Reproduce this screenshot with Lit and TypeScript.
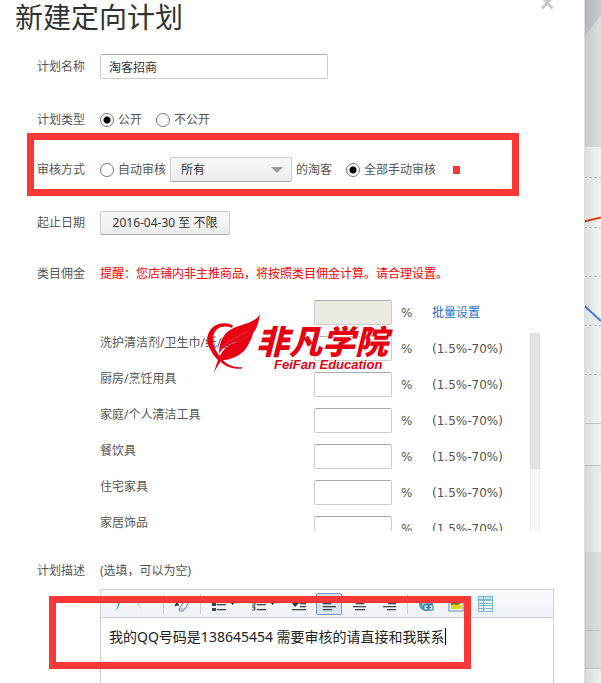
import { LitElement, html, svg, css } from "lit";
import { customElement } from "lit/decorators.js";

const CATEGORIES = ["洗护清洁剂/卫生巾/纸/香薰", "厨房/烹饪用具", "家庭/个人清洁工具", "餐饮具", "住宅家具", "家居饰品"];

const lines = (rows: number[][]) =>
  rows.map(([x, y, w]) => svg`<rect x=${x} y=${y} width=${w} height="1" fill="#444"/><rect x=${x} y=${y + 1} width=${w} height="1" fill="#444" opacity=".3"/>`);

const ICONS: Record<string, unknown> = {
  undo: svg`<path d="M5 2c8-2 11 7 3 13 4-5 4-10-3-11z" fill="#5aa5dc"/>`,
  redo: svg`<path d="M7 2c-8 0-10 8-2 12-3-5-2-9 3-10z" fill="#cfe3f2"/>`,
  eraser: svg`<path d="M1 10l5-6M1 9h4" stroke="#333" stroke-width="1.5"/><path d="M5 13l6-9h5l-5 9-2 2H6z" fill="#f4f9fd" stroke="#6b8296"/><path d="M6 13h5l4-7" fill="none" stroke="#8aa3b8"/>`,
  list: svg`<path d="M1 2h4v3H1zM1 7h4v3H1zM1 12h4v3H1z" fill="#444"/>${lines([[6, 3, 9], [6, 8, 9], [6, 13, 9]])}`,
  ordered: svg`<path d="M2 2h2v4M1 7h3v2H2v1h2M1 11h3v3H1M2 12h2" fill="none" stroke="#555"/>${lines([[6, 3, 9], [6, 8, 9], [6, 13, 9]])}`,
  indent: svg`<path d="M1 7h3V4h2v3h2L4 11z" fill="#333"/>${lines([[9, 4, 6], [9, 7, 6], [9, 10, 6], [1, 13, 14]])}`,
  left: svg`${lines([[2, 4, 13], [2, 7, 8], [2, 10, 13], [2, 13, 9]])}`,
  center: svg`${lines([[2, 4, 13], [5, 7, 8], [2, 10, 13], [4, 13, 10]])}`,
  right: svg`${lines([[2, 4, 13], [7, 7, 8], [2, 10, 13], [6, 13, 9]])}`,
  link: svg`<circle cx="8" cy="8" r="7" fill="#4c9ccc"/><path d="M3 6l4-2 1 4-3 3z" fill="#8fc27c"/><path d="M6 9h4v5H6zM11 9h4v5h-4zM8 11.500h5" fill="#eef6fc" stroke="#2b6ca8"/>`,
  image: svg`<rect x="1" y="1" width="14" height="14" fill="#fff" stroke="#5584a8"/><path d="M3 3h10v6H3z" fill="#536b3c"/><path d="M3 9l3-1 2 1 5-2v6H3z" fill="#d9d411"/>`,
  table: svg`<path d="M0 0h15v16H0z" fill="#79b8d8"/><path d="M1 1h4v2H1zM6 1h8v2H6z" fill="#c2e4f3"/><path d="M1 5h4v2H1zM1 8h4v1H1zM1 10h4v2H1zM1 13h4v2H1zM6 5h8v2H6zM6 8h8v1H6zM6 10h8v2H6zM6 13h8v2H6z" fill="#f3fbff"/>`,
};

@customElement("app-root")
export class AppRoot extends LitElement {
  static styles = css`
    :host {
      display: block;
      font: 12px/20px "Noto Sans", "Noto Sans CJK SC", sans-serif;
      color: #555;
    }
    * { box-sizing: border-box; }
    input, select, button, textarea { font: inherit; color: #333; margin: 0; }
    .page { display: flex; min-height: 100vh; max-height: 100vh; overflow: hidden; background: #fff; }
    .dialog { flex: 1; min-width: 0; position: relative; display: flex; flex-direction: column; }
    .backdrop { flex: none; width: 17px; background: #ebebeb; overflow: hidden; }
    .backdrop svg { display: block; }
    .title { margin: 0 0 0 15px; font-size: 28px; line-height: 34px; font-weight: 400; color: #333; }
    .close { position: absolute; top: 0; right: 30px; width: 14px; height: 10px; padding: 0; border: 0; background: none; }
    .close svg { display: block; }
    .row { display: flex; align-items: center; padding: 0 30px 0 100px; position: relative; }
    .row > .label { width: 63px; margin-left: -63px; flex: none; }
    .name { margin-top: 20px; }
    .type { margin-top: 31px; }
    .review { margin-top: 27px; }
    .date { margin-top: 29px; }
    .fee { margin-top: 29px; }
    .desc { margin-top: 30px; }
    .field { height: 25px; border: 1px solid #ccc; border-top-color: #aaa; border-radius: 2px; background: #fff; }
    .name .field { width: 228px; padding: 0 8px; }
    .radio { display: flex; align-items: center; gap: 4px; margin-right: 14px; white-space: nowrap; }
    .radio input {
      appearance: none; width: 14px; height: 14px; border: 1px solid #777; border-radius: 50%; background: #fff;
    }
    .radio input:checked { background: radial-gradient(circle, #000 3px, #fff 4px); }
    .review .radio { margin-right: 0; }
    .picker { position: relative; display: flex; margin: 0 4px; }
    .picker select {
      appearance: none; width: 122px; height: 25px; padding: 0 10px; border: 1px solid #ccc; border-bottom-color: #aaa;
      border-radius: 2px; background: linear-gradient(#f8f8f8, #ececec);
    }
    .picker svg { position: absolute; right: 9px; top: 10px; pointer-events: none; }
    .suffix { margin-right: 14px; }
    .dot { width: 7px; height: 8px; margin-left: 17px; background: #fb3838; }
    .range-button {
      min-width: 130px; height: 24px; padding: 0 10px; line-height: 22px; border: 1px solid #ccc; border-bottom-color: #aaa;
      border-radius: 2px; background: linear-gradient(#f8f8f8, #ececec); white-space: nowrap;
    }
    .wide { font-family: "DejaVu Sans", "Noto Sans CJK SC", sans-serif; }
    .tip { color: #f00; }
    .rates { margin: 16px 44px 0 100px; position: relative; }
    .line { display: grid; grid-template-columns: minmax(0, 1fr) 78px 40px 98px; }
    .line .field { width: 100%; padding: 0 6px; }
    .line .unit, .line .range { line-height: 26px; }
    .line .unit { padding-left: 9px; }
    .batch { height: 25px; padding-right: 10px; }
    .batch .field { background: #ebebe3; }
    .link { color: #2a6fd0; text-decoration: none; }
    .scroller { display: grid; grid-template-columns: minmax(0, 1fr) 10px; height: 198px; margin-top: 8px; overflow: hidden; }
    .items .line { height: 36px; }
    .items .field, .items .unit, .items .range { margin-top: 3px; }
    .track { border: 1px solid #ededed; background: #f7f7f7; }
    .thumb { height: 136px; margin: -1px; border: 1px solid #ddd; background: #e5e5e5; }
    .brand { position: absolute; left: 106px; top: 13px; width: 186px; height: 62px; color: #e60012; pointer-events: none; }
    .brand svg { position: absolute; left: 0; top: 0; }
    .brand-text { position: absolute; left: 50px; top: 9px; display: flex; flex-direction: column; white-space: nowrap; }
    .brand-cn {
      font: italic 900 33px/36px "Noto Sans CJK SC", sans-serif;
      text-shadow: 1px 0 #fff, -1px 0 #fff, 0 1px #fff, 0 -1px #fff;
    }
    .brand-en {
      padding-left: 18px; font: italic bold 13px/14px "DejaVu Sans", sans-serif;
      font-family: "Liberation Sans", sans-serif;
      text-shadow: 1px 0 #fff, -1px 0 #fff, 0 1px #fff, 0 -1px #fff;
    }
    .editor {
      position: relative; flex: 1; display: flex; flex-direction: column; min-height: 94px; margin: 8px 30px 0 100px;
      border: 1px solid #ced1dd; border-bottom: 0;
    }
    .tools {
      display: flex; align-items: center; gap: 4px; height: 28px; padding: 0 1px; overflow: hidden;
      border-bottom: 1px solid #ced1dd; background: linear-gradient(#f9fafe, #eef3f7);
    }
    .tool {
      display: flex; align-items: center; flex: none; width: 26px; height: 22px; padding: 0 4px; border: 1px solid transparent;
      border-radius: 2px; background: none;
    }
    .tool svg { flex: none; }
    .tool.menu { width: 36px; gap: 3px; }
    .tool.on { border-color: #7294cb; background: #dae3f0; }
    .sep { flex: none; width: 1px; height: 20px; margin: 0 1px 0 1px; background: #ced1d6; }
    .text { display: flex; padding: 9px 8px; }
    .text textarea {
      field-sizing: content; height: 20px; padding: 0; border: 0; outline: 0; resize: none; overflow: hidden; background: none;
      font-size: 14px; line-height: 20px; color: #222; white-space: pre;
    }
    .caret { width: 1px; height: 17px; margin-top: 1px; background: #000; }
    .mark { position: absolute; border: 7px solid #fb3838; pointer-events: none; }
    .mark-review { left: 27px; right: 65px; top: -24px; height: 63px; }
    .mark-desc { left: -52px; right: 82px; top: 6px; height: 73px; }
  `;

  private tool(name: string, label: string, extra = "") {
    return html`<button class="tool ${extra}" type="button" aria-label=${label}>
      <svg width="16" height="16" viewBox="0 0 16 16">${ICONS[name]}</svg>
      ${extra === "menu" ? html`<svg width="5" height="4" viewBox="0 0 5 4"><path d="M0 0h5L2.500 3z" fill="#333" /></svg>` : ""}
    </button>`;
  }

  private backdrop() {
    return html`<div class="backdrop">
      <svg width="17" height="683" viewBox="0 0 17 683" aria-hidden="true">
        <defs>
          <linearGradient id="shade"><stop offset="0" stop-opacity=".1" /><stop offset="1" stop-opacity="0" /></linearGradient>
        </defs>
        <rect width="17" height="147" fill="#dedede" />
        <path d="M0 0h17v15L1 36H0z" fill="#c8c9cc" />
        <rect y="147" width="17" height="318" fill="#f4f4f4" />
        <rect y="465" width="17" height="87" fill="#efefef" />
        <rect y="552" width="17" height="117" fill="#e0e0e0" />
        <rect y="669" width="17" height="14" fill="#efefef" />
        <path d="M0 177.500h17M0 227.500h17M0 276.500h17M0 325.500h17M0 374.500h17" stroke="#c6c6c6" stroke-dasharray="3 2" />
        <path d="M0 423.500h17M0 465.500h17M0 630.500h17M0 668.500h17" stroke="#c8c8c8" />
        <path d="M0 221.500L17 217.500" stroke="#e2440d" stroke-width="2" />
        <path d="M0 305.500L17 321" stroke="#3d7fdc" stroke-width="2" />
        <rect width="17" height="683" fill="url(#shade)" />
        <rect width="1" height="683" fill="#dcdcdc" />
      </svg>
    </div>`;
  }

  private brand() {
    return html`<div class="brand">
      <svg width="56" height="60" viewBox="48 69 168 180" aria-hidden="true">
        <g fill="#e60012">
          <path d="M129 107C112 96 82 98 66 114C46 134 50 163 64 184C69 194 76 202 84 211L92 201C74 179 62 154 72 132C79 112 100 104 126 113Z" />
          <path d="M210 72C198 94 174 99 144 109C112 119 93 139 88 176L87 192C96 174 112 165 129 158C158 148 184 140 196 120C203 109 207 91 210 72Z" />
          <path d="M190 127C168 149 139 153 118 166C102 176 91 192 84 209L71 249C79 235 85 224 94 211C126 210 157 194 171 171C179 157 186 145 190 127Z" />
          <path d="M84 205C100 229 126 239 154 236L158 231C130 234 109 224 94 205Z" />
        </g>
        <path d="M92 180C110 152 142 139 176 124" fill="none" stroke="#fff" stroke-width="1" opacity=".6" />
      </svg>
      <div class="brand-text">
        <span class="brand-cn">非凡学院</span>
        <span class="brand-en">FeiFan Education</span>
      </div>
    </div>`;
  }

  render() {
    return html`<div class="page">
      <main class="dialog">
        <h1 class="title">新建定向计划</h1>
        <button class="close" type="button" aria-label="关闭">
          <svg width="14" height="10" viewBox="0 0 14 10"><path d="M2 -3L12.500 8.500M12.500 -3L2 8.500" stroke="#c9c9c9" stroke-width="3" /></svg>
        </button>

        <div class="row name">
          <label class="label" for="plan">计划名称</label>
          <input class="field" id="plan" type="text" .value=${"淘客招商"} />
        </div>

        <div class="row type" role="radiogroup" aria-labelledby="type">
          <span class="label" id="type">计划类型</span>
          <label class="radio"><input type="radio" name="type" checked />公开</label>
          <label class="radio"><input type="radio" name="type" />不公开</label>
        </div>

        <div class="row review" role="radiogroup" aria-labelledby="review">
          <span class="label" id="review">审核方式</span>
          <label class="radio"><input type="radio" name="review" />自动审核</label>
          <span class="picker">
            <select aria-label="淘客范围"><option>所有</option></select>
            <svg width="12" height="6" viewBox="0 0 12 6"><path d="M0 0h12L6 6z" fill="#999" /></svg>
          </span>
          <span class="suffix">的淘客</span>
          <label class="radio"><input type="radio" name="review" checked />全部手动审核</label>
          <i class="dot"></i>
          <div class="mark mark-review"></div>
        </div>

        <div class="row date">
          <span class="label">起止日期</span>
          <button class="range-button" type="button">2016-04-30 至 不限</button>
        </div>

        <div class="row fee">
          <span class="label">类目佣金</span>
          <span class="tip">提醒：您店铺内非主推商品，将按照类目佣金计算。请合理设置。</span>
        </div>

        <section class="rates">
          <div class="line batch">
            <span></span>
            <input class="field" type="text" disabled aria-label="批量佣金" />
            <span class="unit wide">%</span>
            <a class="link range" href="#">批量设置</a>
          </div>
          <div class="scroller">
            <div class="items">
              ${CATEGORIES.map(
                (name, i) => html`<div class="line">
                  <label for="rate${i}">${name}</label>
                  <input class="field" id="rate${i}" type="text" />
                  <span class="unit wide">%</span>
                  <span class="range wide">(1.5%-70%)</span>
                </div>`
              )}
            </div>
            <div class="track"><div class="thumb"></div></div>
          </div>
          ${this.brand()}
        </section>

        <div class="row desc">
          <label class="label" for="desc">计划描述</label>
          <span>(选填，可以为空)</span>
        </div>

        <div class="editor">
          <div class="tools" role="toolbar">
            ${this.tool("undo", "撤销")} ${this.tool("redo", "重做")}
            <i class="sep"></i>
            ${this.tool("eraser", "清除格式")}
            <i class="sep"></i>
            ${this.tool("list", "项目列表", "menu")} ${this.tool("ordered", "编号列表", "menu")}
            ${this.tool("indent", "缩进")} ${this.tool("left", "左对齐", "on")}
            ${this.tool("center", "居中")} ${this.tool("right", "右对齐")}
            <i class="sep"></i>
            ${this.tool("link", "链接")} ${this.tool("image", "图片")} ${this.tool("table", "表格")}
          </div>
          <div class="text">
            <textarea id="desc" rows="1" .value=${"我的QQ号码是138645454 需要审核的请直接和我联系"}></textarea>
            <i class="caret"></i>
          </div>
          <div class="mark mark-desc"></div>
        </div>
      </main>
      ${this.backdrop()}
    </div>`;
  }
}
